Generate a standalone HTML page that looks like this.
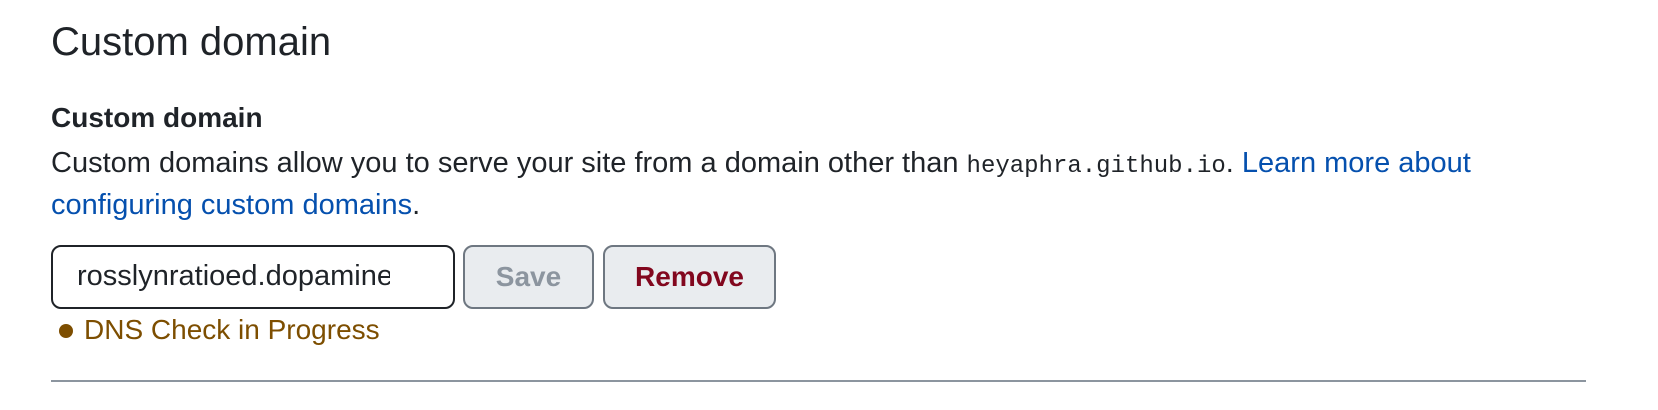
<!DOCTYPE html>
<html><head><meta charset="utf-8"><style>
body{margin:0;background:#fff;width:1658px;height:410px;overflow:hidden;font-family:"Liberation Sans",sans-serif;color:#1f2328;position:relative}
.a{position:absolute;white-space:nowrap}
h2{position:absolute;left:51px;top:20px;margin:0;font-weight:400;font-size:40px;line-height:normal}
.lbl{left:51px;top:102px;font-weight:700;font-size:28px}
.p{left:51px;top:144px;font-size:29px;line-height:39px}
.p code{font-family:"Liberation Mono",monospace;font-size:24px}
a{color:#0550ae;text-decoration:none}
.in{left:51px;top:245px;width:400px;height:60px;border:2px solid #1f2328;border-radius:10px;overflow:hidden}
.in span{position:absolute;left:24px;top:13px;font-size:29px;width:313px;overflow:hidden}
.btn{top:245px;height:60px;border:2px solid #6e7781;border-radius:10px;background:#e9ecef;font-weight:700;font-size:28px;text-align:center;line-height:60px}
.dot{left:59px;top:324px;width:14px;height:14px;border-radius:50%;background:#7d4e00}
.dns{left:84px;top:314px;font-size:28px;color:#7d4e00}
.hr{left:51px;top:380px;width:1535px;height:2px;background:#8c959f}
</style></head><body>
<h2>Custom domain</h2>
<div class="a lbl">Custom domain</div>
<div class="a p">Custom domains allow you to serve your site from a domain other than <code>heyaphra.github.io</code>. <a>Learn more about</a><br><a>configuring custom domains</a>.</div>
<div class="a in"><span class="a">rosslynratioed.dopamine.com</span></div>
<div class="a btn" style="left:463px;width:127px;color:#8c959f">Save</div>
<div class="a btn" style="left:603px;width:169px;color:#82071e">Remove</div>
<div class="a dot"></div>
<div class="a dns">DNS Check in Progress</div>
<div class="a hr"></div>
</body></html>
